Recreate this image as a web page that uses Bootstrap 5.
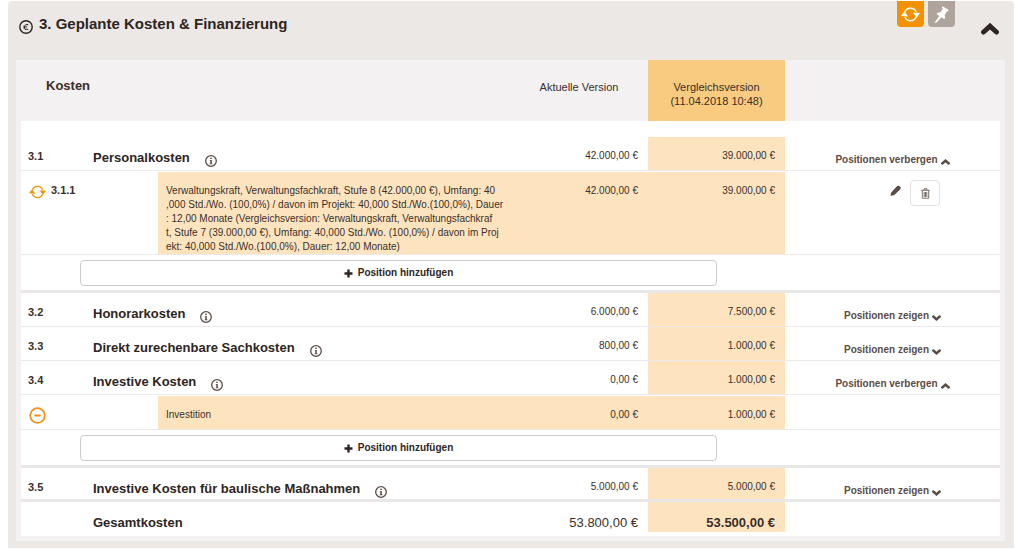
<!DOCTYPE html>
<html lang="de">
<head>
<meta charset="utf-8">
<meta name="viewport" content="width=device-width, initial-scale=1">
<title>Geplante Kosten &amp; Finanzierung</title>
<link href="https://cdn.jsdelivr.net/npm/bootstrap@5.3.0/dist/css/bootstrap.min.css" rel="stylesheet">
<style>
  body { font-family: "Liberation Sans", Arial, sans-serif; font-size: 10px; line-height: 14px; color: #3a2f2a; background: #fff; }
  svg { display: block; flex: none; }
  .panel { margin: 1px 9px 0 8px; padding: 0 9px 7px 8px; background: #ece8e6; border-radius: 4px 4px 0 0; }
  .panel-top { height: 59px; padding-left: 2px; }
  .panel-title { font-size: 15px; line-height: 18px; color: #2d2522; padding-top: 14px; gap: 5px; }
  .tool { width: 27px; height: 26px; border: 0; border-radius: 0 0 4px 4px; color: #fff; }
  .tool-sync { background: #f39200; }
  .tool-pin { background: #aea49d; }
  .fold { margin: 22px 6px 0 26px; color: #2d2522; }
  .plain { border: 0; padding: 0; background: none; }
  .panel-inner { background: #f3f1f2; padding: 0 5px 5px; }
  .costs { width: 100%; table-layout: fixed; border-collapse: separate; border-spacing: 0; }
  .c-num { width: 59px; } .c-indent { width: 78px; } .c-now { width: 138px; } .c-cmp { width: 137px; } .c-act { width: 215px; }
  .costs td, .costs th { vertical-align: top; padding: 0; font-weight: normal; }
  .costs thead th { height: 61px; font-size: 11px; padding-top: 20px; text-align: center; }
  .costs thead th:first-child { font-size: 13px; font-weight: bold; text-align: left; padding: 19px 0 0 25px; }
  .costs thead .cmp { background: #f8cb80; }
  .costs tbody, .costs tfoot { background: #fff; }
  .costs tbody td, .costs tbody th, .costs tfoot td, .costs tfoot th { border-bottom: 1px solid #ebe9e9; }
  .costs .thick > * { border-bottom: 3px solid #e9e7e7; }
  .costs .first > * { border-top: 16px solid #fff; }
  .costs .cat { height: 34px; }
  .costs .first.cat { height: 50px; }
  .costs .num { padding: 12px 0 0 7px; font-size: 11px; font-weight: bold; }
  .costs .name { padding: 13px 0 0 13px; font-size: 13px; line-height: 16px; font-weight: bold; text-align: left; color: #2d2522; }
  .name .plain { margin: 5px 0 0 15px; color: #5b4d46; }
  .costs .eur { padding: 12px 10px 0 0; text-align: right; }
  .costs tbody .cmp, .costs tfoot .cmp, .hit { background: #fde4bf; }
  .costs .act { padding-top: 16px; text-align: center; }
  .act a { color: #5b4d46; font-weight: bold; gap: 3px; }
  .act a svg { margin-top: 5px; }
  .costs .item > * { border-top: 1px solid #fff; }
  .item .mark-cell div { padding: 11px 0 0 8px; gap: 5px; font-size: 11px; }
  .mark-cell .swap { color: #f39200; }
  .costs .item .desc { padding: 12px 0 0 8px; white-space: nowrap; }
  .costs .item.short { height: 35px; }
  .pen { margin: 13px 9px 0 0; color: #5b4d46; }
  .bin { width: 30px; height: 26px; margin-top: 8px; border: 1px solid #e4e1df; border-radius: 4px; color: #6b5e57; background: #fff; }
  .row-tools { padding-right: 60px; }
  .costs .add td { padding: 5px 68px 4px 0; }
  .add-btn { height: 26px; border: 1px solid #ccc; border-radius: 4px; background: #fff; font-weight: bold; color: #2d2522; gap: 5px; }
  .costs tfoot > tr > * { border-bottom: 0; height: 30px; }
  .costs tfoot .eur { font-size: 13px; line-height: 16px; padding-top: 13px; }
</style>
</head>
<body>
<svg width="0" height="0" class="position-absolute" aria-hidden="true">
  <symbol id="sync" viewBox="0 0 18 16"><path d="M3.6 5.6A5.9 5.9 0 0 1 14.4 5.6M14.4 10.4A5.9 5.9 0 0 1 3.6 10.4" fill="none" stroke="currentColor" stroke-width="1.4"/><path d="M3.2 5 6.8 9.8 0 9.4ZM14.8 11 18 6.6l-6.8-.4Z" fill="currentColor"/></symbol>
  <symbol id="info" viewBox="0 0 12 12"><circle cx="6" cy="6" r="5.3" fill="none" stroke="currentColor" stroke-width="1.3"/><path d="M4.8 4.9h2v3.5h.7v.8H4.6v-.8h.7V5.7h-.5ZM5.2 2.7h1.6v1.4H5.2Z" fill="currentColor"/></symbol>
  <symbol id="up" viewBox="0 0 18 12"><path d="M2.6 9 9 3.2 15.4 9" fill="none" stroke="currentColor" stroke-width="5" stroke-linecap="round"/></symbol>
  <symbol id="down" viewBox="0 0 18 12"><path d="M2.6 3 9 8.8 15.4 3" fill="none" stroke="currentColor" stroke-width="5" stroke-linecap="round"/></symbol>
  <symbol id="plus" viewBox="0 0 9 9"><path d="M3.3.5h2.4v2.8h2.8v2.4H5.7v2.8H3.3V5.7H.5V3.3h2.8Z" fill="currentColor"/></symbol>
</svg>

<section class="panel">
  <header class="panel-top d-flex align-items-start">
    <h1 class="panel-title d-flex m-0 me-auto fw-bold">
      <svg width="16" height="16" viewBox="0 0 16 16" class="mt-1" aria-hidden="true"><circle cx="8" cy="8" r="6.2" fill="none" stroke="currentColor" stroke-width="1.4"/><path d="M10.3 5.8Q7.2 4.2 6.5 8T10.3 10.2" fill="none" stroke="currentColor" stroke-width="1"/><path d="M5 7.3H9.3M5 8.9H9" fill="none" stroke="currentColor" stroke-width=".7"/></svg>
      3. Geplante Kosten &amp; Finanzierung
    </h1>
    <button type="button" class="tool tool-sync p-0 me-1 d-flex justify-content-center align-items-center" aria-label="Versionen vergleichen"><svg width="19" height="17"><use href="#sync"/></svg></button>
    <button type="button" class="tool tool-pin p-0 d-flex justify-content-center align-items-center" aria-label="Anheften"><svg width="16" height="18" viewBox="0 0 16 18"><path d="m8.6 1.2 6.2 3.7-1 1.5-.9-.1-2.2 3.6.5 3-1 1-2.8-1.7-5.1 5.6-1.3.1.3-1.4L5.4 11 2.6 9.1l.9-1.3 3-.5 2.2-3.6-.9-1.1Z" fill="currentColor"/></svg></button>
    <button type="button" class="plain fold" aria-label="Abschnitt einklappen"><svg width="18" height="12"><use href="#up"/></svg></button>
  </header>
  <div class="panel-inner">
    <table class="costs">
      <colgroup><col class="c-num"><col class="c-indent"><col><col class="c-now"><col class="c-cmp"><col class="c-act"></colgroup>
      <thead>
        <tr><th colspan="3" scope="col">Kosten</th><th scope="col">Aktuelle Version</th><th scope="col" class="cmp">Vergleichsversion<br>(11.04.2018 10:48)</th><td></td></tr>
      </thead>
      <tbody>
        <tr class="cat first">
          <td class="num">3.1</td>
          <th class="name" colspan="2" scope="row"><div class="d-flex">Personalkosten<button type="button" class="plain" aria-label="Info"><svg width="12" height="12"><use href="#info"/></svg></button></div></th>
          <td class="eur">42.000,00 €</td><td class="eur cmp">39.000,00 €</td>
          <td class="act"><a href="#" class="d-inline-flex text-decoration-none">Positionen verbergen<svg width="9" height="8"><use href="#up"/></svg></a></td>
        </tr>
        <tr class="item">
          <td class="mark-cell" colspan="2"><div class="d-flex fw-bold"><svg width="17" height="18" class="swap"><use href="#sync"/></svg>3.1.1</div></td>
          <td class="desc hit">Verwaltungskraft, Verwaltungsfachkraft, Stufe 8 (42.000,00 €), Umfang: 40<br>,000 Std./Wo. (100,0%) / davon im Projekt: 40,000 Std./Wo.(100,0%), Dauer<br>: 12,00 Monate (Vergleichsversion: Verwaltungskraft, Verwaltungsfachkraf<br>t, Stufe 7 (39.000,00 €), Umfang: 40,000 Std./Wo. (100,0%) / davon im Proj<br>ekt: 40,000 Std./Wo.(100,0%), Dauer: 12,00 Monate)</td>
          <td class="eur hit">42.000,00 €</td><td class="eur cmp">39.000,00 €</td>
          <td><div class="row-tools d-flex justify-content-end align-items-start">
            <button type="button" class="plain pen" aria-label="Bearbeiten"><svg width="11" height="12" viewBox="0 0 11 12"><path d="M.5 11 1.2 7.4 6.2 1.9Q8.3-.2 10 1.4T9.6 5L4.3 10.1Z" fill="currentColor"/></svg></button>
            <button type="button" class="bin p-0 d-flex justify-content-center align-items-center" aria-label="Löschen"><svg width="9" height="11" viewBox="0 0 9 11"><path d="M.3 2.3h8.4M3 2V.8h3V2M1.3 2.5v7.7h6.4V2.5M3.2 4v5M4.5 4v5M5.8 4v5" fill="none" stroke="currentColor" stroke-width=".9"/></svg></button>
          </div></td>
        </tr>
        <tr class="add thick"><td></td><td colspan="4"><button type="button" class="add-btn p-0 w-100 d-flex justify-content-center align-items-center"><svg width="9" height="9"><use href="#plus"/></svg>Position hinzufügen</button></td><td></td></tr>
        <tr class="cat">
          <td class="num">3.2</td>
          <th class="name" colspan="2" scope="row"><div class="d-flex">Honorarkosten<button type="button" class="plain" aria-label="Info"><svg width="12" height="12"><use href="#info"/></svg></button></div></th>
          <td class="eur">6.000,00 €</td><td class="eur cmp">7.500,00 €</td>
          <td class="act"><a href="#" class="d-inline-flex text-decoration-none">Positionen zeigen<svg width="9" height="8"><use href="#down"/></svg></a></td>
        </tr>
        <tr class="cat">
          <td class="num">3.3</td>
          <th class="name" colspan="2" scope="row"><div class="d-flex">Direkt zurechenbare Sachkosten<button type="button" class="plain" aria-label="Info"><svg width="12" height="12"><use href="#info"/></svg></button></div></th>
          <td class="eur">800,00 €</td><td class="eur cmp">1.000,00 €</td>
          <td class="act"><a href="#" class="d-inline-flex text-decoration-none">Positionen zeigen<svg width="9" height="8"><use href="#down"/></svg></a></td>
        </tr>
        <tr class="cat">
          <td class="num">3.4</td>
          <th class="name" colspan="2" scope="row"><div class="d-flex">Investive Kosten<button type="button" class="plain" aria-label="Info"><svg width="12" height="12"><use href="#info"/></svg></button></div></th>
          <td class="eur">0,00 €</td><td class="eur cmp">1.000,00 €</td>
          <td class="act"><a href="#" class="d-inline-flex text-decoration-none">Positionen verbergen<svg width="9" height="8"><use href="#up"/></svg></a></td>
        </tr>
        <tr class="item short">
          <td class="mark-cell" colspan="2"><div class="d-flex"><svg width="17" height="17" viewBox="0 0 17 17"><circle cx="8.5" cy="8.5" r="7.3" fill="none" stroke="#ef8f1c" stroke-width="1.7"/><path d="M6.2 8.5h4.6" stroke="#ef8f1c" stroke-width="2.2" stroke-linecap="round"/></svg></div></td>
          <td class="desc hit">Investition</td>
          <td class="eur hit">0,00 €</td><td class="eur cmp">1.000,00 €</td><td></td>
        </tr>
        <tr class="add thick"><td></td><td colspan="4"><button type="button" class="add-btn p-0 w-100 d-flex justify-content-center align-items-center"><svg width="9" height="9"><use href="#plus"/></svg>Position hinzufügen</button></td><td></td></tr>
        <tr class="cat thick">
          <td class="num">3.5</td>
          <th class="name" colspan="2" scope="row"><div class="d-flex">Investive Kosten für baulische Maßnahmen<button type="button" class="plain" aria-label="Info"><svg width="12" height="12"><use href="#info"/></svg></button></div></th>
          <td class="eur">5.000,00 €</td><td class="eur cmp">5.000,00 €</td>
          <td class="act"><a href="#" class="d-inline-flex text-decoration-none">Positionen zeigen<svg width="9" height="8"><use href="#down"/></svg></a></td>
        </tr>
      </tbody>
      <tfoot>
        <tr><td></td><th class="name" colspan="2" scope="row">Gesamtkosten</th><td class="eur">53.800,00 €</td><td class="eur cmp fw-bold">53.500,00 €</td><td></td></tr>
      </tfoot>
    </table>
    <div class="bg-white pt-1"></div>
  </div>
</section>
<script src="https://cdn.jsdelivr.net/npm/bootstrap@5.3.0/dist/js/bootstrap.bundle.min.js"></script>
</body>
</html>
